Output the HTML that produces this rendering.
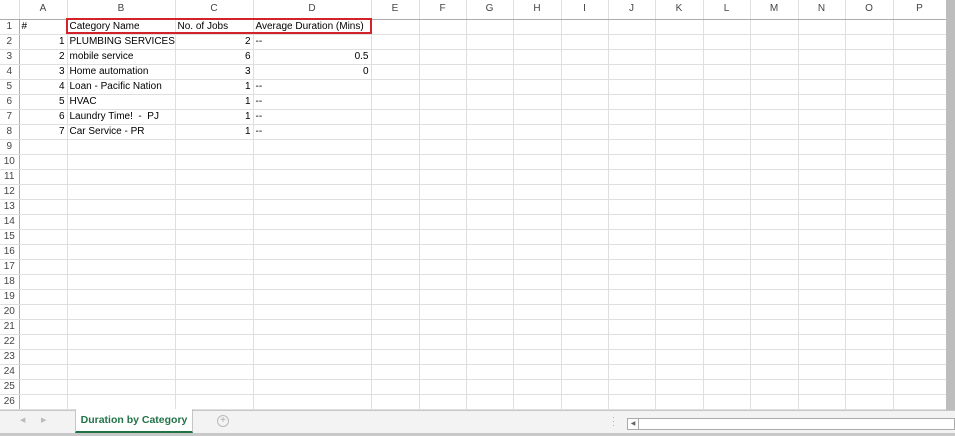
<!DOCTYPE html>
<html><head><style>
*{margin:0;padding:0;box-sizing:border-box}
body{width:955px;height:436px;overflow:hidden;background:#fff;font-family:"Liberation Sans",sans-serif;position:relative}
table{border-collapse:collapse;table-layout:fixed;position:absolute;left:0;top:0;width:946px}
td{height:15px;border-right:1px solid #dfdfdf;border-bottom:1px solid #dfdfdf;font-size:10px;color:#000;white-space:nowrap;overflow:hidden;padding:0 2px;line-height:14px;vertical-align:bottom}
tr.h td{height:19px;text-align:center;color:#444;font-size:10px;border-bottom:1px solid #ababab;background:#fff;vertical-align:middle}
td.rh{text-align:center;color:#444;font-size:10px;border-right:1px solid #ababab;padding:0}
.r{text-align:right}
#box{position:absolute;left:66px;top:18px;width:306px;height:16px;border:2px solid #d3222a}
#rs{position:absolute;left:946px;top:0;width:9px;height:413px;background:#bdbdbd}
#tabs{position:absolute;left:0;top:410px;width:955px;height:23px;background:#f3f3f3;border-top:1px solid #c6c6c6}
#bot{position:absolute;left:0;top:433px;width:955px;height:3px;background:#c8c8c8}
#tab{position:absolute;left:75px;top:409px;width:118px;height:24px;background:#fff;border-left:1px solid #c6c6c6;border-right:1px solid #c6c6c6;border-bottom:2px solid #217346;color:#217346;font-weight:bold;font-size:10.5px;text-align:center;line-height:22px}
#hs{position:absolute;left:627px;top:418px;width:328px;height:12px;background:#fff;border:1px solid #aaa}
</style></head><body>
<table>
<colgroup><col style="width:19px"><col style="width:48px"><col style="width:108px"><col style="width:78px"><col style="width:118px"><col style="width:48px"><col style="width:47px"><col style="width:47px"><col style="width:48px"><col style="width:47px"><col style="width:47px"><col style="width:48px"><col style="width:47px"><col style="width:48px"><col style="width:47px"><col style="width:48px"><col style="width:53px"></colgroup>
<tr class="h"><td style="background:#fff"></td><td>A</td><td>B</td><td>C</td><td>D</td><td>E</td><td>F</td><td>G</td><td>H</td><td>I</td><td>J</td><td>K</td><td>L</td><td>M</td><td>N</td><td>O</td><td>P</td></tr>
<tr><td class="rh">1</td><td>#</td><td>Category Name</td><td>No. of Jobs</td><td>Average Duration (Mins)</td><td></td><td></td><td></td><td></td><td></td><td></td><td></td><td></td><td></td><td></td><td></td><td></td></tr>
<tr><td class="rh">2</td><td class="r">1</td><td>PLUMBING SERVICES</td><td class="r">2</td><td>--</td><td></td><td></td><td></td><td></td><td></td><td></td><td></td><td></td><td></td><td></td><td></td><td></td></tr>
<tr><td class="rh">3</td><td class="r">2</td><td>mobile service</td><td class="r">6</td><td class="r">0.5</td><td></td><td></td><td></td><td></td><td></td><td></td><td></td><td></td><td></td><td></td><td></td><td></td></tr>
<tr><td class="rh">4</td><td class="r">3</td><td>Home automation</td><td class="r">3</td><td class="r">0</td><td></td><td></td><td></td><td></td><td></td><td></td><td></td><td></td><td></td><td></td><td></td><td></td></tr>
<tr><td class="rh">5</td><td class="r">4</td><td>Loan - Pacific Nation</td><td class="r">1</td><td>--</td><td></td><td></td><td></td><td></td><td></td><td></td><td></td><td></td><td></td><td></td><td></td><td></td></tr>
<tr><td class="rh">6</td><td class="r">5</td><td>HVAC</td><td class="r">1</td><td>--</td><td></td><td></td><td></td><td></td><td></td><td></td><td></td><td></td><td></td><td></td><td></td><td></td></tr>
<tr><td class="rh">7</td><td class="r">6</td><td>Laundry Time! &nbsp;- &nbsp;PJ</td><td class="r">1</td><td>--</td><td></td><td></td><td></td><td></td><td></td><td></td><td></td><td></td><td></td><td></td><td></td><td></td></tr>
<tr><td class="rh">8</td><td class="r">7</td><td>Car Service - PR</td><td class="r">1</td><td>--</td><td></td><td></td><td></td><td></td><td></td><td></td><td></td><td></td><td></td><td></td><td></td><td></td></tr>
<tr><td class="rh">9</td><td></td><td></td><td></td><td></td><td></td><td></td><td></td><td></td><td></td><td></td><td></td><td></td><td></td><td></td><td></td><td></td></tr>
<tr><td class="rh">10</td><td></td><td></td><td></td><td></td><td></td><td></td><td></td><td></td><td></td><td></td><td></td><td></td><td></td><td></td><td></td><td></td></tr>
<tr><td class="rh">11</td><td></td><td></td><td></td><td></td><td></td><td></td><td></td><td></td><td></td><td></td><td></td><td></td><td></td><td></td><td></td><td></td></tr>
<tr><td class="rh">12</td><td></td><td></td><td></td><td></td><td></td><td></td><td></td><td></td><td></td><td></td><td></td><td></td><td></td><td></td><td></td><td></td></tr>
<tr><td class="rh">13</td><td></td><td></td><td></td><td></td><td></td><td></td><td></td><td></td><td></td><td></td><td></td><td></td><td></td><td></td><td></td><td></td></tr>
<tr><td class="rh">14</td><td></td><td></td><td></td><td></td><td></td><td></td><td></td><td></td><td></td><td></td><td></td><td></td><td></td><td></td><td></td><td></td></tr>
<tr><td class="rh">15</td><td></td><td></td><td></td><td></td><td></td><td></td><td></td><td></td><td></td><td></td><td></td><td></td><td></td><td></td><td></td><td></td></tr>
<tr><td class="rh">16</td><td></td><td></td><td></td><td></td><td></td><td></td><td></td><td></td><td></td><td></td><td></td><td></td><td></td><td></td><td></td><td></td></tr>
<tr><td class="rh">17</td><td></td><td></td><td></td><td></td><td></td><td></td><td></td><td></td><td></td><td></td><td></td><td></td><td></td><td></td><td></td><td></td></tr>
<tr><td class="rh">18</td><td></td><td></td><td></td><td></td><td></td><td></td><td></td><td></td><td></td><td></td><td></td><td></td><td></td><td></td><td></td><td></td></tr>
<tr><td class="rh">19</td><td></td><td></td><td></td><td></td><td></td><td></td><td></td><td></td><td></td><td></td><td></td><td></td><td></td><td></td><td></td><td></td></tr>
<tr><td class="rh">20</td><td></td><td></td><td></td><td></td><td></td><td></td><td></td><td></td><td></td><td></td><td></td><td></td><td></td><td></td><td></td><td></td></tr>
<tr><td class="rh">21</td><td></td><td></td><td></td><td></td><td></td><td></td><td></td><td></td><td></td><td></td><td></td><td></td><td></td><td></td><td></td><td></td></tr>
<tr><td class="rh">22</td><td></td><td></td><td></td><td></td><td></td><td></td><td></td><td></td><td></td><td></td><td></td><td></td><td></td><td></td><td></td><td></td></tr>
<tr><td class="rh">23</td><td></td><td></td><td></td><td></td><td></td><td></td><td></td><td></td><td></td><td></td><td></td><td></td><td></td><td></td><td></td><td></td></tr>
<tr><td class="rh">24</td><td></td><td></td><td></td><td></td><td></td><td></td><td></td><td></td><td></td><td></td><td></td><td></td><td></td><td></td><td></td><td></td></tr>
<tr><td class="rh">25</td><td></td><td></td><td></td><td></td><td></td><td></td><td></td><td></td><td></td><td></td><td></td><td></td><td></td><td></td><td></td><td></td></tr>
<tr><td class="rh">26</td><td></td><td></td><td></td><td></td><td></td><td></td><td></td><td></td><td></td><td></td><td></td><td></td><td></td><td></td><td></td><td></td></tr>
<tr><td class="rh">27</td><td></td><td></td><td></td><td></td><td></td><td></td><td></td><td></td><td></td><td></td><td></td><td></td><td></td><td></td><td></td><td></td></tr>
</table>
<div id="box"></div>
<div id="rs"></div>
<div id="tabs">
<span style="position:absolute;left:20px;top:5px;font-size:7px;color:#bbb">◀</span>
<span style="position:absolute;left:41px;top:5px;font-size:7px;color:#bbb">▶</span>
<span style="position:absolute;left:217px;top:4px;width:12px;height:12px;border:1px solid #bbb;border-radius:50%;color:#aaa;font-size:10px;line-height:10px;text-align:center">+</span>
<span style="position:absolute;left:612px;top:4px;font-size:9px;color:#aaa;line-height:4px">·<br>·<br>·</span>
</div>
<div id="tab">Duration by Category</div>
<div id="hs"><span style="position:absolute;left:0;top:0;width:11px;height:10px;border-right:1px solid #aaa;font-size:6px;color:#666;line-height:10px;text-align:center">◀</span></div>
<div id="bot"></div>
</body></html>
